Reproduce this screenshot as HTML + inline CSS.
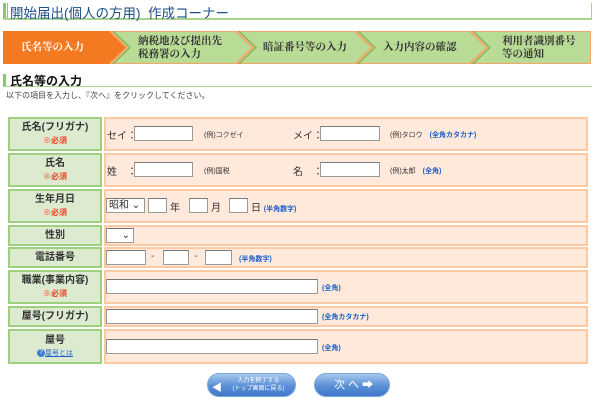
<!DOCTYPE html>
<html><head><meta charset="utf-8"><style>
*{margin:0;padding:0;box-sizing:border-box}
body{width:600px;height:401px;background:#fff;position:relative;overflow:hidden;font-family:"Liberation Sans","Noto Sans CJK JP",sans-serif;color:#333}
.a{position:absolute}
.lab{position:absolute;left:8px;width:94px;background:#dcebd0;border:2px solid #9fd07e;text-align:center;font-size:10px;font-weight:bold;color:#333;display:flex;flex-direction:column;justify-content:center;align-items:center;line-height:13px}
.val{position:absolute;left:104px;width:484px;background:#fee9db;border:2px solid #fcc9a2;font-size:10px;color:#444}
.req{color:#f04020;font-size:8px}
.in{position:absolute;height:15px;border:1px solid #999;background:#fff;border-top-color:#777}
.t{position:absolute;font-size:10px;white-space:nowrap}
.s{font-size:7px}
.b{color:#1a5fc8;font-size:7px;font-weight:bold}
.step{position:absolute;top:31px;height:33px;font-size:10.5px;font-weight:bold;color:#333;line-height:13px;display:flex;align-items:center;font-family:"Liberation Serif","Noto Serif CJK SC",serif;white-space:nowrap}
</style></head><body>
<div class="a" style="left:3px;top:3px;width:3px;height:17px;background:#8fc56a"></div>
<div class="a" style="left:7px;top:3px;width:1px;height:17px;background:#8fc56a"></div>
<div class="a" style="left:3px;top:18px;width:589px;height:2px;background:#a9d48a"></div>
<div class="a" style="left:591px;top:3px;width:1px;height:17px;background:#a9d48a"></div>
<div class="t" style="left:10px;top:2px;font-size:13.5px;color:#1d4f8a">開始届出(個人の方用)&nbsp; 作成コーナー</div>

<svg class="a" style="left:3px;top:31px" width="588" height="33">
<rect x="0" y="0" width="588" height="33" fill="#b8db95"/>
<rect x="0.5" y="0.5" width="587" height="32" fill="none" stroke="#f3a76a" stroke-width="1"/>
<polygon points="0,0 107,0 124,16.5 107,33 0,33" fill="#f37a20"/>
<g fill="none" stroke="#f3a76a" stroke-width="2">
<polyline points="107,0 124,16.5 107,33"/>
<polyline points="233,0 250,16.5 233,33"/>
<polyline points="352,0 369,16.5 352,33"/>
<polyline points="467,0 484,16.5 467,33"/>
</g>
<g fill="none" stroke="#6fae40" stroke-width="1">
<polyline points="110,0 127,16.5 110,33"/>
<polyline points="236,0 253,16.5 236,33"/>
<polyline points="355,0 372,16.5 355,33"/>
<polyline points="470,0 487,16.5 470,33"/>
</g>
</svg>
<div class="step" style="left:21px;color:#fff">氏名等の入力</div>
<div class="step" style="left:138px">納税地及び提出先<br>税務署の入力</div>
<div class="step" style="left:263px">暗証番号等の入力</div>
<div class="step" style="left:383px">入力内容の確認</div>
<div class="step" style="left:502px">利用者識別番号<br>等の通知</div>

<div class="a" style="left:3px;top:74px;width:3px;height:12px;background:#8fc56a"></div>
<div class="a" style="left:3px;top:86px;width:589px;height:1px;background:#a9d48a"></div>
<div class="t" style="left:10px;top:72px;font-size:12px;font-weight:bold;color:#111">氏名等の入力</div>
<div class="t" style="left:6px;top:90px;font-size:8px;color:#444">以下の項目を入力し、『次へ』をクリックしてください。</div>

<div class="lab" style="top:117px;height:34px">氏名(フリガナ)<span class="req">※必須</span></div>
<div class="val" style="top:117px;height:34px"></div>
<div class="t" style="left:107px;top:127px">セイ：</div>
<div class="in" style="left:134px;top:126px;width:59px"></div>
<div class="t s" style="left:204px;top:130px">(例)コクゼイ</div>
<div class="t" style="left:293px;top:127px">メイ：</div>
<div class="in" style="left:320px;top:126px;width:60px"></div>
<div class="t s" style="left:390px;top:130px">(例)タロウ　<span class="b">(全角カタカナ)</span></div>

<div class="lab" style="top:153px;height:34px">氏名<span class="req">※必須</span></div>
<div class="val" style="top:153px;height:34px"></div>
<div class="t" style="left:107px;top:163px">姓　：</div>
<div class="in" style="left:134px;top:162px;width:59px"></div>
<div class="t s" style="left:204px;top:166px">(例)国税</div>
<div class="t" style="left:293px;top:163px">名　：</div>
<div class="in" style="left:320px;top:162px;width:60px"></div>
<div class="t s" style="left:390px;top:166px">(例)太郎　<span class="b">(全角)</span></div>

<div class="lab" style="top:189px;height:34px">生年月日<span class="req">※必須</span></div>
<div class="val" style="top:189px;height:34px"></div>
<div class="in" style="left:106px;top:198px;width:39px;font-size:10px;padding-left:2px;line-height:13px">昭和 ⌄</div>
<div class="in" style="left:148px;top:198px;width:19px"></div>
<div class="t" style="left:170px;top:199px">年</div>
<div class="in" style="left:189px;top:198px;width:19px"></div>
<div class="t" style="left:211px;top:199px">月</div>
<div class="in" style="left:229px;top:198px;width:19px"></div>
<div class="t" style="left:251px;top:199px">日 <span class="b">(半角数字)</span></div>

<div class="lab" style="top:225px;height:21px">性別</div>
<div class="val" style="top:225px;height:21px"></div>
<div class="in" style="left:106px;top:228px;width:28px;font-size:10px;text-align:right;padding-right:3px;line-height:13px">⌄</div>

<div class="lab" style="top:247px;height:21px">電話番号</div>
<div class="val" style="top:247px;height:21px"></div>
<div class="in" style="left:106px;top:250px;width:40px"></div>
<div class="t" style="left:151px;top:251px;color:#555">-</div>
<div class="in" style="left:163px;top:250px;width:26px"></div>
<div class="t" style="left:194px;top:251px;color:#555">-</div>
<div class="in" style="left:205px;top:250px;width:27px"></div>
<div class="t b" style="left:239px;top:254px">(半角数字)</div>

<div class="lab" style="top:270px;height:34px">職業(事業内容)<span class="req">※必須</span></div>
<div class="val" style="top:270px;height:34px"></div>
<div class="in" style="left:106px;top:279px;width:212px"></div>
<div class="t b" style="left:322px;top:283px">(全角)</div>

<div class="lab" style="top:306px;height:21px">屋号(フリガナ)</div>
<div class="val" style="top:306px;height:21px"></div>
<div class="in" style="left:106px;top:309px;width:212px"></div>
<div class="t b" style="left:322px;top:312px">(全角カタカナ)</div>

<div class="lab" style="top:329px;height:35px">屋号<span style="font-size:7px;color:#1a5fc8;text-decoration:underline;font-weight:normal"><span style="display:inline-block;width:8px;height:8px;border-radius:50%;background:#3a7fd0;color:#fff;text-decoration:none;line-height:8px;font-size:6px;vertical-align:middle">?</span>屋号とは</span></div>
<div class="val" style="top:329px;height:35px"></div>
<div class="in" style="left:106px;top:339px;width:212px"></div>
<div class="t b" style="left:322px;top:343px">(全角)</div>

<div class="a" style="left:207px;top:373px;width:89px;height:24px;border-radius:12px;background:linear-gradient(#a6c8ee,#5a8fd6 55%,#3f78c8);border:1px solid #7aa6dc;color:#fff;font-size:6px;line-height:8px;text-align:center;padding-top:3px;padding-left:14px">入力を終了する<br>(トップ画面に戻る)</div>
<div class="t" style="left:212px;top:379px;color:#fff;font-size:10px">◀</div>
<div class="a" style="left:314px;top:373px;width:76px;height:24px;border-radius:12px;background:linear-gradient(#a6c8ee,#5a8fd6 55%,#3f78c8);border:1px solid #7aa6dc;color:#fff;font-size:11px;line-height:22px;padding-left:19px">次 へ ➡</div>
</body></html>
